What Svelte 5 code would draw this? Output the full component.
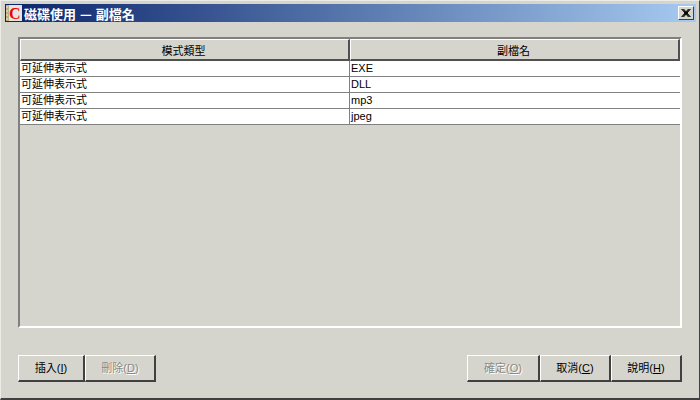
<script>
  const rows = [
    { type: '可延伸表示式', ext: 'EXE' },
    { type: '可延伸表示式', ext: 'DLL' },
    { type: '可延伸表示式', ext: 'mp3' },
    { type: '可延伸表示式', ext: 'jpeg' }
  ];
</script>

<div class="window">
  <div class="titlebar">
    <svg class="app-icon" width="16" height="16" viewBox="0 0 16 16">
      <rect width="16" height="16" fill="#e6e4de" />
      <rect x="0" y="0" width="3" height="16" fill="#b9b184" />
      <path d="M1 1 V15" stroke="#eeeade" stroke-width="1" stroke-dasharray="2 2" />
      <text x="3" y="14" class="icon-c">C</text>
    </svg>
    <span class="title">磁碟使用 — 副檔名</span>
    <button class="close" aria-label="關閉">
      <svg width="10" height="8" viewBox="0 0 10 8">
        <path d="M0.5 0 L7.5 8 M2.5 0 L9.5 8 M9.5 0 L2.5 8 M7.5 0 L0.5 8 M1.5 0 L8.5 8 M8.5 0 L1.5 8" stroke="#000" stroke-width="1" fill="none" />
      </svg>
    </button>
  </div>

  <div class="content">
    <div class="panel">
      <div class="header">
        <div class="head-cell">模式類型</div>
        <div class="head-cell">副檔名</div>
      </div>
      {#each rows as row}
        <div class="row">
          <div class="cell first">{row.type}</div>
          <div class="cell">{row.ext}</div>
        </div>
      {/each}
    </div>

    <div class="actions">
      <div class="group">
        <button class="btn narrow">插入(<u>I</u>)</button>
        <button class="btn" disabled>刪除(<u>D</u>)</button>
      </div>
      <div class="group">
        <button class="btn wide" disabled>確定(<u>O</u>)</button>
        <button class="btn">取消(<u>C</u>)</button>
        <button class="btn">說明(<u>H</u>)</button>
      </div>
    </div>
  </div>
</div>

<style>
  :global(body) {
    margin: 0;
    background: #d6d5cd;
  }

  .window {
    width: 700px;
    height: 400px;
    box-sizing: border-box;
    padding: 3px 3px 0 4px;
    display: flex;
    flex-direction: column;
    background: #d6d5cd;
    border-top: 1px solid #ecebe6;
    border-left: 1px solid #ecebe6;
    border-right: 1px solid #404040;
    border-bottom: 2px solid #404040;
    font-family: "Liberation Sans", "Noto Sans CJK TC", sans-serif;
    font-size: 11px;
    color: #000;
  }

  .titlebar {
    height: 18px;
    flex: none;
    display: flex;
    align-items: center;
    background: linear-gradient(to right, #0a246a, #a6caf0);
    color: #fff;
  }

  .app-icon {
    flex: none;
    margin-left: 1px;
  }

  .icon-c {
    font-family: "Liberation Serif", serif;
    font-weight: bold;
    font-size: 16px;
    fill: #f00000;
  }

  .title {
    margin-left: 2px;
    font-family: "Noto Sans CJK TC", sans-serif;
    font-weight: bold;
    font-size: 13px;
    word-spacing: 1px;
    flex: 1;
  }

  .close {
    width: 16px;
    height: 14px;
    margin-right: 2px;
    padding: 0;
    display: flex;
    align-items: center;
    justify-content: center;
    background: #d6d5cd;
    border: 1px solid;
    border-color: #fff #404040 #404040 #fff;
  }

  .content {
    flex: 1;
    display: flex;
    flex-direction: column;
    padding: 15px 14px 16px 13px;
  }

  .panel {
    height: 291px;
    box-sizing: border-box;
    border-style: solid;
    border-width: 2px;
    border-color: #808080 #fff #fff #808080;
  }

  .header {
    display: grid;
    grid-template-columns: 330px 1fr;
    height: 22px;
  }

  .head-cell {
    display: flex;
    align-items: center;
    justify-content: center;
    padding-right: 2px;
    background: #d6d5cd;
    border-style: solid;
    border-color: #fff #505050 #505050 #fff;
    border-width: 1px 2px 2px 1px;
  }

  .row {
    display: grid;
    grid-template-columns: 330px 1fr;
    height: 16px;
    background: #fff;
    border-bottom: 1px solid #808080;
    box-sizing: border-box;
  }

  .cell {
    padding-left: 1px;
    line-height: 15px;
    white-space: nowrap;
  }

  .first {
    border-right: 1px solid #808080;
  }

  .actions {
    margin-top: auto;
    display: flex;
    justify-content: space-between;
  }

  .group {
    display: flex;
  }

  .btn {
    width: 71px;
    height: 27px;
    padding: 0 0 2px;
    font: inherit;
    color: #000;
    background: #d6d5cd;
    border-style: solid;
    border-color: #fff #404040 #404040 #fff;
    border-width: 1px 2px 2px 1px;
  }

  .narrow {
    width: 67px;
  }

  .wide {
    width: 73px;
  }

  .btn:disabled {
    color: #8a8a85;
    text-shadow: 1px 1px 0 #fff;
  }
</style>
